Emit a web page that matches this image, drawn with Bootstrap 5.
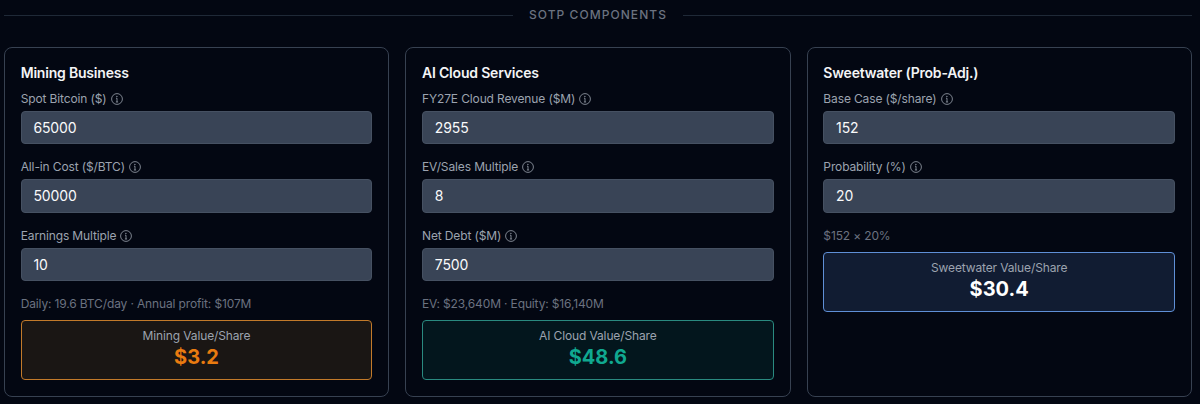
<!DOCTYPE html>
<html lang="en">
<head>
  <meta charset="UTF-8">
  <title>SOTP Components</title>
  <link rel="stylesheet" href="https://cdn.jsdelivr.net/npm/bootstrap@5.3.0/dist/css/bootstrap.min.css">
  <style>
    body { background: #030712; font-family: Inter, "Liberation Sans", sans-serif; overflow: hidden; }
    .page-wrap { padding: 7px 8px 0 4px; }
    .section-head { height: 16px; margin-bottom: 24px; gap: 16px; }
    .section-head hr { flex: 1; margin: 0; border: 0; border-top: 1px solid #1f2937; opacity: 1; }
    .section-head span { color: #6b7280; font-size: 12px; font-weight: 500; letter-spacing: 1.05px; line-height: 16px; }
    .sotp-grid { gap: 16px; }
    .sotp-card { flex: 1 1 0; height: 350px; border: 1px solid #374151; border-radius: 8px; padding: 16px 16px 16px 15.7px; background: #030712; }
    .sotp-title { color: #f3f4f6; font-size: 14px; font-weight: 600; letter-spacing: -0.2px; line-height: 18px; margin: 0 0 8.5px; }
    .field-label { color: #9ca3af; font-size: 12px; letter-spacing: -0.13px; line-height: 16px; margin-bottom: 4px; gap: 4px; }
    .field-label svg { display: block; }
    .field-input.form-control { height: 33.5px; background: #394456; border: 1px solid #465162; border-radius: 4px; color: #f9fafb; font-size: 14px; letter-spacing: -0.1px; padding: 0 11.7px; margin-bottom: 15px; box-shadow: none; }
    .calc-note { color: #6b7280; font-size: 12px; letter-spacing: -0.14px; line-height: 16px; margin: 0 0 8px; }
    .result-box { height: 60px; border-radius: 4px; border: 1px solid; text-align: center; padding-top: 7px; }
    .result-label { color: #9ca3af; font-size: 12px; letter-spacing: -0.13px; line-height: 16px; }
    .result-value { font-size: 20px; font-weight: 700; line-height: 27px; }
    .result-mining { background: #1a1614; border-color: #c27a2a; }
    .result-mining .result-value { color: #e97b10; }
    .result-cloud { background: #03161d; border-color: #2a8a80; }
    .result-cloud .result-value { color: #10a890; }
    .result-sweet { background: #111c32; border-color: #5f8fd6; }
    .result-sweet .result-value { color: #fff; }
  </style>
</head>
<body>
  <svg width="0" height="0" class="d-block position-absolute">
    <symbol id="info-icon" viewBox="0 0 12 12">
      <circle cx="6" cy="6" r="5.4" fill="none" stroke="currentColor" stroke-width=".8"/>
      <path d="M6 5.2V9M5 5.2h1M4.9 9h2.2" fill="none" stroke="currentColor" stroke-width=".8"/>
      <circle cx="5.9" cy="3.4" r=".6" fill="currentColor"/>
    </symbol>
  </svg>
  <div class="page-wrap">
    <div class="section-head d-flex align-items-center">
      <hr><span>SOTP COMPONENTS</span><hr>
    </div>
    <div class="sotp-grid d-flex">

      <!-- Mining -->
      <div class="sotp-card">
        <h3 class="sotp-title">Mining Business</h3>
        <div class="field-label d-flex align-items-center">Spot Bitcoin ($) <svg width="12" height="12"><use href="#info-icon"/></svg></div>
        <input class="form-control field-input" value="65000">
        <div class="field-label d-flex align-items-center">All-in Cost ($/BTC) <svg width="12" height="12"><use href="#info-icon"/></svg></div>
        <input class="form-control field-input" value="50000">
        <div class="field-label d-flex align-items-center">Earnings Multiple <svg width="12" height="12"><use href="#info-icon"/></svg></div>
        <input class="form-control field-input" value="10">
        <div class="calc-note">Daily: 19.6 BTC/day · Annual profit: $107M</div>
        <div class="result-box result-mining">
          <div class="result-label">Mining Value/Share</div>
          <div class="result-value">$3.2</div>
        </div>
      </div>

      <!-- AI Cloud -->
      <div class="sotp-card">
        <h3 class="sotp-title">AI Cloud Services</h3>
        <div class="field-label d-flex align-items-center">FY27E Cloud Revenue ($M) <svg width="12" height="12"><use href="#info-icon"/></svg></div>
        <input class="form-control field-input" value="2955">
        <div class="field-label d-flex align-items-center">EV/Sales Multiple <svg width="12" height="12"><use href="#info-icon"/></svg></div>
        <input class="form-control field-input" value="8">
        <div class="field-label d-flex align-items-center">Net Debt ($M) <svg width="12" height="12"><use href="#info-icon"/></svg></div>
        <input class="form-control field-input" value="7500">
        <div class="calc-note">EV: $23,640M · Equity: $16,140M</div>
        <div class="result-box result-cloud">
          <div class="result-label">AI Cloud Value/Share</div>
          <div class="result-value">$48.6</div>
        </div>
      </div>

      <!-- Sweetwater -->
      <div class="sotp-card">
        <h3 class="sotp-title">Sweetwater (Prob-Adj.)</h3>
        <div class="field-label d-flex align-items-center">Base Case ($/share) <svg width="12" height="12"><use href="#info-icon"/></svg></div>
        <input class="form-control field-input" value="152">
        <div class="field-label d-flex align-items-center">Probability (%) <svg width="12" height="12"><use href="#info-icon"/></svg></div>
        <input class="form-control field-input" value="20">
        <div class="calc-note">$152 × 20%</div>
        <div class="result-box result-sweet">
          <div class="result-label">Sweetwater Value/Share</div>
          <div class="result-value">$30.4</div>
        </div>
      </div>

    </div>
  </div>
  <script src="https://cdn.jsdelivr.net/npm/bootstrap@5.3.0/dist/js/bootstrap.bundle.min.js"></script>
</body>
</html>
